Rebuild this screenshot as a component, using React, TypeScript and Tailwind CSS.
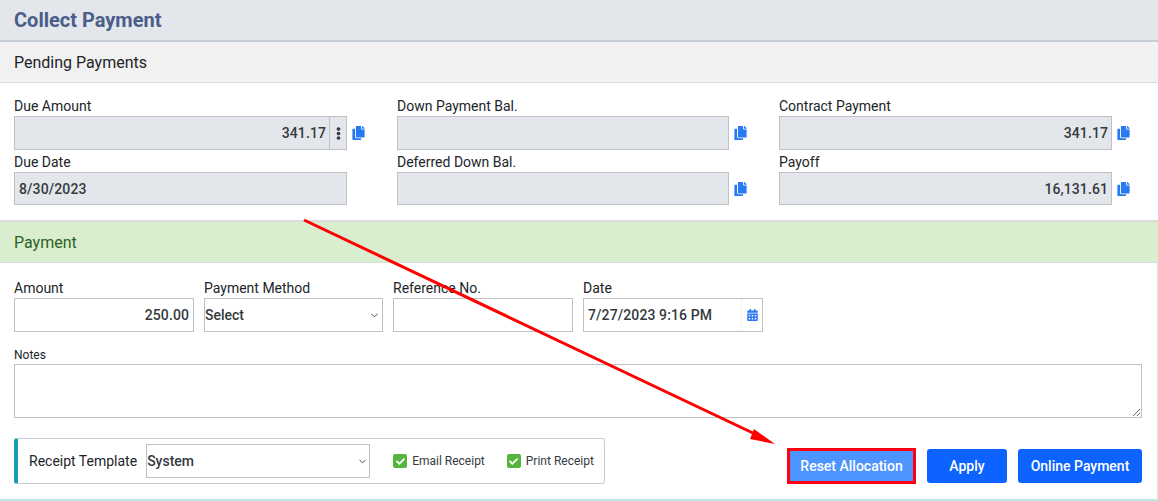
import { ChevronDown } from "lucide-react";
import { FaCalendarAlt, FaCheck, FaCopy, FaEllipsisV } from "react-icons/fa";

const inputBox =
  "h-full w-full bg-transparent text-[14px] font-medium tracking-[0.1px] text-[#343a40] outline-none";

const CopyIcon = () => <FaCopy className="ml-[5px] h-[14px] w-[13px] shrink-0 text-[#2979f2]" />;

const ReadOnlyField = ({
  label,
  value = "",
  align = "right",
  copy = true,
  menu = false,
  width = "w-[333px]",
  height = "h-[34px]",
}: {
  label: string;
  value?: string;
  align?: "left" | "right";
  copy?: boolean;
  menu?: boolean;
  width?: string;
  height?: string;
}) => (
  <div>
    <label className="block h-[20px] text-[14px] leading-[20px] text-[#212529]">{label}</label>
    <div className="flex items-center">
      <div className={`flex border border-[#bfc1c4] bg-[#e3e6ea] ${width} ${height}`}>
        <input
          readOnly
          value={value}
          className={`${inputBox} min-w-0 flex-1 ${align === "right" ? "pr-[3px] text-right" : "pl-[4px] text-left"}`}
        />
        {menu && (
          <div className="flex w-[17px] shrink-0 items-center justify-center border-l border-[#bfc1c4]">
            <FaEllipsisV className="h-[13px] w-[13px] text-[#343a40]" />
          </div>
        )}
      </div>
      {copy && <CopyIcon />}
    </div>
  </div>
);

const EntryField = ({
  label,
  children,
  width,
}: {
  label: string;
  children: React.ReactNode;
  width: string;
}) => (
  <div className={width}>
    <label className="block h-[20px] text-[14px] leading-[20px] text-[#212529]">{label}</label>
    <div className="relative h-[34px] border border-[#bfc1c4] bg-white">{children}</div>
  </div>
);

const CheckItem = ({ label }: { label: string }) => (
  <div className="flex items-center">
    <span className="flex h-[14px] w-[14px] items-center justify-center rounded-[2px] bg-[#56b53c]">
      <FaCheck className="h-[9px] w-[9px] text-white" />
    </span>
    <span className="ml-[5px] text-[12px] text-[#343a40]">{label}</span>
  </div>
);

export default function App() {
  return (
    <div className="relative h-[501px] w-[1158px] overflow-hidden bg-white font-['Roboto',sans-serif]">
      <header className="flex h-[42px] items-center border-b-2 border-[#c8ced8] bg-[#e3e6eb] px-[14px]">
        <h1 className="text-[20px] font-bold text-[#4a5e8a]">Collect Payment</h1>
      </header>

      <div className="flex h-[41px] items-center border-b border-[#dcdcdc] bg-[#f1f1f1] px-[14px] pt-px">
        <h2 className="text-[16px] text-[#212529]">Pending Payments</h2>
      </div>

      <section className="grid h-[139px] grid-cols-[383px_382px_1fr] grid-rows-[56px_1fr] border-b-2 border-[#dcdcdc] px-[14px] pt-[13px]">
        <ReadOnlyField label="Due Amount" value="341.17" menu />
        <ReadOnlyField label="Down Payment Bal." width="w-[332px]" />
        <ReadOnlyField label="Contract Payment" value="341.17" />
        <ReadOnlyField label="Due Date" value="8/30/2023" align="left" copy={false} height="h-[33px]" />
        <ReadOnlyField label="Deferred Down Bal." width="w-[332px]" height="h-[33px]" />
        <ReadOnlyField label="Payoff" value="16,131.61" height="h-[33px]" />
      </section>

      <div className="flex h-[41px] items-center border-b border-[#dcdcdc] bg-[#d9edcf] px-[14px] pt-px">
        <h2 className="text-[16px] text-[#2b6322]">Payment</h2>
      </div>

      <section className="pl-[14px] pr-[16px] pt-[15px]">
        <div className="flex gap-[10px]">
          <EntryField label="Amount" width="w-[180px]">
            <input readOnly value="250.00" className={`${inputBox} pr-[4px] text-right`} />
          </EntryField>
          <EntryField label="Payment Method" width="w-[179px]">
            <select className="h-full w-full appearance-none bg-transparent text-[14px] font-medium text-[#343a40] outline-none">
              <option>Select</option>
            </select>
            <ChevronDown className="absolute right-[2px] top-[11px] h-[11px] w-[11px] text-[#343a40]" />
          </EntryField>
          <EntryField label="Reference No." width="w-[180px]">
            <input readOnly value="" className={inputBox} />
          </EntryField>
          <EntryField label="Date" width="w-[180px]">
            <div className="flex h-full">
              <input readOnly value="7/27/2023 9:16 PM" className={`${inputBox} min-w-0 flex-1 pl-[4px]`} />
              <div className="flex w-[21px] items-center justify-center border-l border-[#f4f4f4]">
                <FaCalendarAlt className="h-[12px] w-[11px] text-[#2979f2]" />
              </div>
            </div>
          </EntryField>
        </div>

        <label className="mt-[14px] block h-[18px] text-[12px] leading-[18px] text-[#212529]">Notes</label>
        <textarea className="block h-[54px] w-full border border-[#bfc1c4] bg-white outline-none" />

        <div className="mt-[20px] flex items-start justify-between">
          <div className="flex h-[46px] w-[591px] items-center rounded-[3px] border border-[#c9ccd6] border-l-[4px] border-l-[#1a9bb0] pl-[11px]">
            <span className="text-[14px] text-[#212529]">Receipt Template</span>
            <div className="relative ml-[9px] h-[34px] w-[224px] border border-[#bfc1c4]">
              <select className="h-full w-full appearance-none bg-transparent text-[14px] font-medium text-[#343a40] outline-none">
                <option>System</option>
              </select>
              <ChevronDown className="absolute right-[1px] top-[11px] h-[11px] w-[11px] text-[#343a40]" />
            </div>
            <div className="ml-[23px] flex gap-[22px]">
              <CheckItem label="Email Receipt" />
              <CheckItem label="Print Receipt" />
            </div>
          </div>

          <div className="mt-[10px] flex items-center">
            <button className="h-[36px] w-[129px] border-[3px] border-[#ff0010] bg-[#4d94ff] text-[14px] font-medium text-white">
              Reset Allocation
            </button>
            <button className="ml-[11px] h-[34px] w-[80px] rounded-[3px] bg-[#0d63ff] text-[14px] font-medium text-white">
              Apply
            </button>
            <button className="ml-[11px] h-[34px] w-[124px] rounded-[3px] bg-[#0d63ff] text-[14px] font-medium text-white">
              Online Payment
            </button>
          </div>
        </div>
      </section>

      <div className="absolute bottom-0 left-0 h-[2px] w-full bg-[#b9e6e6]" />
      <div className="absolute right-0 top-[263px] h-[236px] w-px bg-[#d9edcf]" />

      <svg className="pointer-events-none absolute left-0 top-0" width="1158" height="501" viewBox="0 0 1158 501">
        <line x1="304" y1="220" x2="755" y2="434" stroke="#ff0000" strokeWidth="3" />
        <polygon points="775,444 750,439 754,429" fill="#ff0000" />
      </svg>
    </div>
  );
}
